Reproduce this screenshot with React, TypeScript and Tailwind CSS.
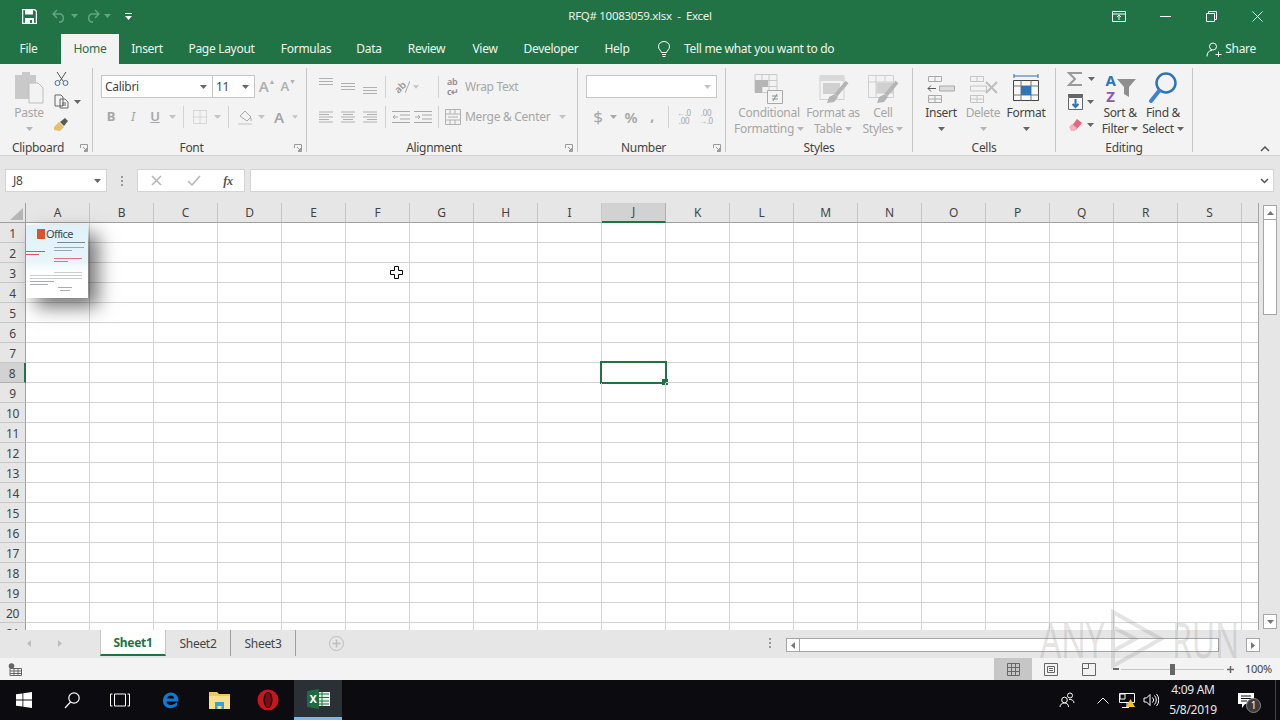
import type { ReactNode } from "react";

const FONT = "[font-family:'Noto_Sans','Open_Sans',sans-serif] tracking-[-0.3px]";
const COLUMNS = ["A", "B", "C", "D", "E", "F", "G", "H", "I", "J", "K", "L", "M", "N", "O", "P", "Q", "R", "S", ""];
const ROWS = Array.from({ length: 21 }, (_, i) => i + 1);
const TABS = [
  { name: "File", w: "w-[57px]" },
  { name: "Home", w: "w-[58px] ml-[4px]" },
  { name: "Insert", w: "w-[56px]" },
  { name: "Page Layout", w: "w-[93px]" },
  { name: "Formulas", w: "w-[76px]" },
  { name: "Data", w: "w-[50px]" },
  { name: "Review", w: "w-[65px]" },
  { name: "View", w: "w-[52px]" },
  { name: "Developer", w: "w-[80px]" },
  { name: "Help", w: "w-[52px]" },
];

function Caret({ color = "#a8a8a8" }: { color?: string }) {
  return (
    <svg width="7" height="4" viewBox="0 0 7 4">
      <path d="M0 0h7L3.5 4z" fill={color} />
    </svg>
  );
}

function Launcher() {
  return (
    <svg width="8" height="8" viewBox="0 0 8 8" fill="none" stroke="#9a9a9a">
      <path d="M.5 4V.5H7.5V7.5H4M3 3l3.5 3.5M6.5 4v2.500H4" />
    </svg>
  );
}

function Group({ w, label, launcher, children }: { w: string; label: string; launcher?: boolean; children: ReactNode }) {
  return (
    <div className={`${w} h-[84px] shrink-0 flex flex-col border-r border-[#c6c6c6]`}>
      <div className="h-[72px] shrink-0 flex">{children}</div>
      <div className="h-[16px] shrink-0 flex items-center text-[12px] text-[#444444]">
        <div className="flex-1 text-center leading-none">{label}</div>
        {launcher && (
          <div className="w-[16px] flex justify-center">
            <Launcher />
          </div>
        )}
      </div>
    </div>
  );
}

function Box({ w, children }: { w: string; children?: ReactNode }) {
  return <div className={`${w} h-full shrink-0 flex items-center justify-center`}>{children}</div>;
}

function Sep({ w = "w-[8px]" }: { w?: string }) {
  return (
    <div className={`${w} h-[22px] shrink-0 flex justify-center`}>
      <div className="w-px h-full bg-[#d2d2d2]" />
    </div>
  );
}

function Big({ w, icon, lines, dim, caretLine }: { w: string; icon: ReactNode; lines: string[]; dim?: boolean; caretLine?: boolean }) {
  const text = dim ? "text-[#a6a6a6]" : "text-[#444444]";
  return (
    <div className={`${w} shrink-0 flex flex-col items-center text-[12px] ${text}`}>
      <div className="h-[37px] flex items-end">{icon}</div>
      {lines.map((line, i) => (
        <div key={line} className="h-[16px] flex items-center gap-[3px] whitespace-nowrap">
          {line}
          {caretLine && i === lines.length - 1 && <Caret color={dim ? "#b5b5b5" : "#666666"} />}
        </div>
      ))}
      {!caretLine && (
        <div className="h-[16px] flex items-center">
          <Caret color={dim ? "#b5b5b5" : "#666666"} />
        </div>
      )}
    </div>
  );
}

function AlignLines({ align = "left" }: { align?: "left" | "center" | "right" }) {
  const short = align === "left" ? "M1 4.500h10M1 9.500h10" : align === "right" ? "M5 4.500h10M5 9.500h10" : "M3 4.500h10M3 9.500h10";
  return (
    <svg width="16" height="14" viewBox="0 0 16 14" fill="none" stroke="#b0b0b0">
      <path d="M1 2h14M1 7h14M1 12h14" />
      <path d={short} />
    </svg>
  );
}

function VLines({ top }: { top: number }) {
  return (
    <svg width="16" height="10" viewBox="0 0 16 10" fill="none" stroke="#b0b0b0" style={{ marginTop: top }}>
      <path d="M1 1.500h14M1 4.500h14M1 7.500h14" />
    </svg>
  );
}

function GridIcon({ children }: { children?: ReactNode }) {
  return (
    <svg width="32" height="32" viewBox="0 0 32 32" fill="none">
      {children}
    </svg>
  );
}

function ClipboardGroup() {
  return (
    <Group w="w-[93px]" label="Clipboard" launcher>
      <div className="ml-[5px] w-[48px] shrink-0 flex flex-col items-center text-[12px] text-[#a6a6a6]">
        <div className="h-[37px] flex items-end">
          <svg width="30" height="34" viewBox="0 0 30 34">
            <path d="M1 4h7V1h8v3h6v24H1z" fill="#c9c9c9" />
            <path d="M15 12h9l5 5v15H15z" fill="#f3f3f3" stroke="#bdbdbd" />
          </svg>
        </div>
        <div className="h-[16px] flex items-center">Paste</div>
        <div className="h-[16px] flex items-center">
          <Caret color="#b5b5b5" />
        </div>
      </div>
      <div className="flex flex-col -mt-px">
        <div className="h-[23px] w-[32px] flex items-center">
          <div className="w-[16px] flex justify-center">
            <svg width="15" height="15" viewBox="0 0 15 15" fill="none" stroke="#555">
              <path d="M3 1l6 9M12 1L6 10" />
              <circle cx="3.500" cy="12" r="2.500" stroke="#3f6f9f" />
              <circle cx="11.500" cy="12" r="2.500" stroke="#3f6f9f" />
            </svg>
          </div>
        </div>
        <div className="h-[23px] w-[32px] flex items-center">
          <div className="w-[16px] flex justify-center">
            <svg width="15" height="15" viewBox="0 0 15 15" fill="none" stroke="#666">
              <path d="M1 1h6l2 2v9H1zM6 5h5l3 3v6H6zM8 9h4M8 11h4" fill="#f3f3f3" />
            </svg>
          </div>
          <div className="w-[16px] flex justify-center">
            <Caret color="#666666" />
          </div>
        </div>
        <div className="h-[23px] w-[32px] flex items-center">
          <div className="w-[16px] flex justify-center">
            <svg width="16" height="16" viewBox="0 0 16 16">
              <path d="M1 10l5-5 5 5-4 4-6-1z" fill="#e3bf6f" />
              <path d="M7 5l5-4 3 3-4 5z" fill="#5a5a5a" />
            </svg>
          </div>
        </div>
      </div>
    </Group>
  );
}

function FontGroup() {
  return (
    <Group w="w-[214px]" label="Font" launcher>
      <div className="flex flex-col pt-[7px] w-full">
        <div className="flex h-[23px] pl-[8px] items-center">
          <div className="w-[112px] h-[23px] bg-white border border-[#c6c6c6] flex items-center justify-between pl-[3px] pr-[5px] text-[12px] text-[#444444]">
            Calibri
            <Caret color="#666666" />
          </div>
          <div className="w-[43px] h-[23px] -ml-px bg-white border border-[#c6c6c6] flex items-center justify-between pl-[3px] pr-[5px] text-[12px] text-[#444444]">
            11
            <Caret color="#666666" />
          </div>
          <Box w="w-[22px] ml-px">
            <span className="text-[15px] font-semibold text-[#b0b0b0]">A</span>
            <span className="text-[7px] text-[#b0b0b0] -mt-[8px]">▲</span>
          </Box>
          <Box w="w-[20px]">
            <span className="text-[13px] font-semibold text-[#b0b0b0]">A</span>
            <span className="text-[7px] text-[#b0b0b0] -mt-[8px]">▼</span>
          </Box>
        </div>
        <div className="flex h-[22px] mt-[8px] pl-[7px] items-center text-[13px] text-[#a6a6a6]">
          <Box w="w-[22px]">
            <span className="font-bold">B</span>
          </Box>
          <Box w="w-[22px]">
            <span className="italic">I</span>
          </Box>
          <Box w="w-[22px]">
            <span className="underline font-semibold">U</span>
          </Box>
          <Box w="w-[12px]">
            <Caret color="#c4c4c4" />
          </Box>
          <div className="w-[1px] ml-[5px] mr-[6px] h-[22px] bg-[#d2d2d2]" />
          <Box w="w-[20px]">
            <svg width="14" height="14" viewBox="0 0 14 14" fill="none" stroke="#bdbdbd" strokeDasharray="1 1">
              <path d="M.5.500h13v13H.5zM7 .5v13M.5 7h13" />
            </svg>
          </Box>
          <Box w="w-[14px]">
            <Caret color="#c4c4c4" />
          </Box>
          <div className="w-[1px] ml-[4px] mr-[7px] h-[22px] bg-[#d2d2d2]" />
          <Box w="w-[20px]">
            <svg width="16" height="16" viewBox="0 0 16 16" fill="none" stroke="#a9a9a9">
              <path d="M2 7l5-5 6 6-4 4z" />
              <path d="M13 9v3" />
              <path d="M0 15h14" stroke="#dcdcdc" strokeWidth="2" />
            </svg>
          </Box>
          <Box w="w-[10px]">
            <Caret color="#c4c4c4" />
          </Box>
          <Box w="w-[26px]">
            <span className="font-semibold text-[15px]">A</span>
          </Box>
          <Box w="w-[6px]">
            <Caret color="#c4c4c4" />
          </Box>
        </div>
      </div>
    </Group>
  );
}

function AlignmentGroup() {
  return (
    <Group w="w-[271px]" label="Alignment" launcher>
      <div className="flex flex-col pt-[7px] w-full pl-[8px] text-[12px] text-[#a6a6a6]">
        <div className="flex h-[23px] items-center">
          <Box w="w-[22px]">
            <VLines top={-9} />
          </Box>
          <Box w="w-[22px]">
            <VLines top={0} />
          </Box>
          <Box w="w-[22px]">
            <VLines top={8} />
          </Box>
          <Sep />
          <div className="ml-[2px] w-[22px] flex justify-center items-center">
            <span className="text-[10px] leading-none font-semibold text-[#9a9a9a] -rotate-45">ab</span>
            <svg width="5" height="14" viewBox="0 0 5 14" fill="none" stroke="#a9a9a9">
              <path d="M0 13L5 1" />
            </svg>
          </div>
          <div className="w-[6px] flex justify-center mr-[15px]">
            <Caret color="#c4c4c4" />
          </div>
          <Sep />
          <div className="w-[22px] flex justify-center text-[9px] leading-[10px] text-[#8d8d8d] font-semibold">
            <span>
              ab
              <br />
              c↵
            </span>
          </div>
          <span className="ml-px whitespace-nowrap">Wrap Text</span>
        </div>
        <div className="flex h-[22px] mt-[8px] items-center">
          <Box w="w-[22px]">
            <AlignLines align="left" />
          </Box>
          <Box w="w-[22px]">
            <AlignLines align="center" />
          </Box>
          <Box w="w-[22px]">
            <AlignLines align="right" />
          </Box>
          <Sep />
          <div className="ml-px w-[22px] flex justify-center">
            <svg width="18" height="14" viewBox="0 0 18 14" fill="none" stroke="#a9a9a9">
              <path d="M0 1.500h18M8 5h10M8 9h10M0 12.500h18M6 7H1M3 5L1 7l2 2" />
            </svg>
          </div>
          <div className="w-[22px] flex justify-center">
            <svg width="18" height="14" viewBox="0 0 18 14" fill="none" stroke="#a9a9a9">
              <path d="M0 1.500h18M8 5h10M8 9h10M0 12.500h18M1 7h5M4 5l2 2-2 2" />
            </svg>
          </div>
          <Sep />
          <div className="w-[22px] flex justify-center">
            <svg width="16" height="16" viewBox="0 0 16 16" fill="none" stroke="#b0b0b0">
              <path d="M.5.500h15v15H.5zM.5 5h15M.5 11h15M5 .5V5M10 .5V5M5 11v4.500M10 11v4.500M3 8h10" />
            </svg>
          </div>
          <span className="ml-px whitespace-nowrap">Merge &amp; Center</span>
          <div className="ml-[9px]">
            <Caret color="#c4c4c4" />
          </div>
        </div>
      </div>
    </Group>
  );
}

function NumberGroup() {
  return (
    <Group w="w-[148px]" label="Number" launcher>
      <div className="flex flex-col pt-[7px] w-full">
        <div className="pl-[8px]">
          <div className="w-[131px] h-[23px] bg-white border border-[#c6c6c6] flex items-center justify-end pr-[5px]">
            <Caret color="#c4c4c4" />
          </div>
        </div>
        <div className="flex h-[22px] mt-[8px] pl-[10px] items-center text-[#a6a6a6]">
          <Box w="w-[20px]">
            <span className="text-[17px]">$</span>
          </Box>
          <Box w="w-[10px]">
            <Caret color="#a8a8a8" />
          </Box>
          <Box w="w-[26px]">
            <span className="text-[15px] font-semibold">%</span>
          </Box>
          <Box w="w-[16px]">
            <span className="text-[14px] font-bold -mt-[4px]">,</span>
          </Box>
          <Sep w="w-[16px]" />
          <Box w="w-[16px]">
            <span className="text-[8px] leading-[8px] text-center whitespace-pre">{"←.0\n.00"}</span>
          </Box>
          <Box w="w-[26px] pl-[2px]">
            <span className="text-[8px] leading-[8px] text-center whitespace-pre">{".00\n→.0"}</span>
          </Box>
        </div>
      </div>
    </Group>
  );
}

function StylesGroup() {
  return (
    <Group w="w-[187px]" label="Styles">
      <div className="flex pl-[8px]">
        <Big
          w="w-[70px]"
          dim
          caretLine
          lines={["Conditional", "Formatting"]}
          icon={
            <GridIcon>
              <path d="M2 1.500h22v18H2zM2 7.500h22M2 13.500h22M9 1.500v18M16 1.500v18" stroke="#c9c9c9" />
              <path d="M2 7h13v7H9v6H2z" fill="#b5b5b5" />
              <path d="M14.500 17.500h15v13h-15z" fill="#f3f3f3" stroke="#a9a9a9" />
              <path d="M19 23h6M19 26h6M24 21l-4 7" stroke="#8e8e8e" />
            </GridIcon>
          }
        />
        <Big
          w="w-[58px]"
          dim
          caretLine
          lines={["Format as", "Table"]}
          icon={
            <GridIcon>
              <path d="M3 2.500h24v24H3z" stroke="#cfcfcf" />
              <path d="M3 2h24v6H3z" fill="#d9d9d9" />
              <path d="M6 10h17v11H6z" fill="#d0d0d0" />
              <path d="M30 9L19 22" stroke="#b5b5b5" strokeWidth="4" />
              <path d="M12 24l6-3 3 3-4 5-7 1z" fill="#b5b5b5" />
            </GridIcon>
          }
        />
        <Big
          w="w-[42px]"
          dim
          caretLine
          lines={["Cell", "Styles"]}
          icon={
            <GridIcon>
              <path d="M1.500 2.500h25v22h-25zM1.500 9h25M9 2.500v22M18 2.500v6" stroke="#cfcfcf" />
              <path d="M9.500 9.500h17v11h-17z" fill="#d0d0d0" />
              <path d="M30 9L19 22" stroke="#b5b5b5" strokeWidth="4" />
              <path d="M12 24l6-3 3 3-4 5-7 1z" fill="#b5b5b5" />
            </GridIcon>
          }
        />
      </div>
    </Group>
  );
}

function CellsGroup() {
  return (
    <Group w="w-[143px]" label="Cells">
      <div className="flex pl-[7px]">
        <Big
          w="w-[42px]"
          lines={["Insert"]}
          icon={
            <GridIcon>
              <path d="M3.500 3.500h13v5h-13zM10 3.500v5M3.500 22.500h13v7h-13zM3.500 26h13M10 22.500v7" stroke="#a9a9a9" />
              <path d="M14.500 13h15v5h-15z" fill="#dcdcdc" stroke="#a9a9a9" />
              <path d="M11 15.500H3M6 12.500l-3 3 3 3" stroke="#5a5a5a" />
            </GridIcon>
          }
        />
        <Big
          w="w-[42px]"
          dim
          lines={["Delete"]}
          icon={
            <GridIcon>
              <path d="M3.500 3.500h13v5h-13zM10 3.500v5M3.500 22.500h13v7h-13zM3.500 26h13M10 22.500v7M3.500 13h16v5h-16z" stroke="#c4c4c4" />
              <path d="M19 9l11 11M30 9L19 20" stroke="#bdbdbd" strokeWidth="2" />
            </GridIcon>
          }
        />
        <Big
          w="w-[44px]"
          lines={["Format"]}
          icon={
            <GridIcon>
              <path d="M4 3h24M4 1v4M28 1v4" stroke="#2f6ea8" />
              <path d="M3.500 7.500h25v20h-25z" fill="#f8f8f8" stroke="#444" />
              <path d="M3.500 13h25M3.500 22h25M11 7.500v20M21 7.500v20" stroke="#777" />
              <path d="M11 13h10v9H11z" fill="#2f74b5" />
            </GridIcon>
          }
        />
      </div>
    </Group>
  );
}

function EditingGroup() {
  return (
    <Group w="w-[137px]" label="Editing">
      <div className="flex pl-[10px]">
        <div className="w-[32px] shrink-0 flex flex-col -mt-px">
          <div className="h-[23px] flex items-center">
            <div className="w-[18px] flex justify-center">
              <svg width="16" height="16" viewBox="0 0 16 16" fill="none" stroke="#9a9a9a" strokeWidth="2">
                <path d="M15 2H2l6 6-6 6h13" />
              </svg>
            </div>
            <div className="w-[14px] pl-[4px]">
              <Caret color="#666666" />
            </div>
          </div>
          <div className="h-[23px] flex items-center">
            <div className="w-[18px] flex justify-center">
              <svg width="15" height="16" viewBox="0 0 15 16">
                <path d="M.5 3.500h14v12H.5z" fill="#f8f8f8" stroke="#666" />
                <path d="M0 0h15v3H0z" fill="#666" />
                <path d="M7.500 5v8M4.500 10l3 3 3-3" stroke="#2f74b5" strokeWidth="2" fill="none" />
              </svg>
            </div>
            <div className="w-[14px] pl-[3px]">
              <Caret color="#666666" />
            </div>
          </div>
          <div className="h-[23px] flex items-center">
            <div className="w-[18px] flex justify-center">
              <svg width="15" height="14" viewBox="0 0 15 14">
                <path d="M9 1l5 4-6 7-5-3z" fill="#e8657e" />
                <path d="M1 9l3-3 5 4-2 3H3z" fill="#f2b3bf" />
              </svg>
            </div>
            <div className="w-[14px] pl-[3px]">
              <Caret color="#666666" />
            </div>
          </div>
        </div>
        <Big
          w="w-[44px]"
          caretLine
          lines={["Sort &", "Filter"]}
          icon={
            <div className="w-[32px] h-[34px] flex items-center">
              <div className="w-[13px] flex flex-col items-center text-[15px] leading-[16px] font-bold">
                <span className="text-[#2f74b5]">A</span>
                <span className="text-[#8a5aa8]">Z</span>
              </div>
              <svg width="19" height="20" viewBox="0 0 19 20">
                <path d="M0 1h19l-7 8v10l-5-3V9z" fill="#8e8e8e" />
              </svg>
            </div>
          }
        />
        <Big
          w="w-[42px]"
          caretLine
          lines={["Find &", "Select"]}
          icon={
            <svg width="30" height="34" viewBox="0 0 30 34" fill="none">
              <circle cx="18" cy="12" r="9.500" stroke="#2f74b5" strokeWidth="2.500" />
              <path d="M11 20L3 30" stroke="#3d85c6" strokeWidth="4" strokeLinecap="round" />
            </svg>
          }
        />
      </div>
    </Group>
  );
}

function Ribbon() {
  return (
    <div className="h-[92px] shrink-0 bg-[#f3f3f3] border-b border-[#d2d2d2] pt-[4px] flex relative">
      <ClipboardGroup />
      <FontGroup />
      <AlignmentGroup />
      <NumberGroup />
      <StylesGroup />
      <CellsGroup />
      <EditingGroup />
      <div className="flex-1 flex items-end justify-end pr-[10px] pb-[3px]">
        <svg width="10" height="6" viewBox="0 0 10 6" fill="none" stroke="#555" strokeWidth="1.500">
          <path d="M1 5l4-4 4 4" />
        </svg>
      </div>
    </div>
  );
}

function TitleBar() {
  return (
    <div className="h-[32px] shrink-0 grid grid-cols-[1fr_auto_1fr] items-center text-white">
      <div className="flex items-center pl-[22px]">
        <svg width="15" height="15" viewBox="0 0 15 15">
          <path d="M.5.500h12l2 2v12H.5z" fill="none" stroke="#fff" strokeWidth="1.500" />
          <path d="M3 1h8v4.500H3zM3 9h9v5H3z" fill="#fff" />
          <path d="M8 11h2v3H8z" fill="#217346" />
        </svg>
        <div className="ml-[15px]">
          <svg width="15" height="14" viewBox="0 0 15 14" fill="none" stroke="#63a582" strokeWidth="1.500">
            <path d="M5 1L1 5l4 4M1 5h8a4.500 4.500 0 0 1 0 8H7" />
          </svg>
        </div>
        <div className="ml-[4px]">
          <Caret color="#63a582" />
        </div>
        <div className="ml-[7px]">
          <svg width="15" height="14" viewBox="0 0 15 14" fill="none" stroke="#63a582" strokeWidth="1.500">
            <path d="M10 1l4 4-4 4M14 5H6a4.500 4.500 0 0 0 0 8h2" />
          </svg>
        </div>
        <div className="ml-[4px]">
          <Caret color="#63a582" />
        </div>
        <div className="ml-[14px] flex flex-col items-center gap-[2px]">
          <div className="w-[7px] h-px bg-white" />
          <Caret color="#ffffff" />
        </div>
      </div>
      <div className="text-[11.500px] whitespace-pre text-[#e8f1ec]">RFQ# 10083059.xlsx  -  Excel</div>
      <div className="flex justify-end h-full">
        <div className="w-[46px] flex items-center justify-center">
          <svg width="14" height="11" viewBox="0 0 14 11" fill="none" stroke="#fff">
            <path d="M.5.500h13v10H.5zM.5 3h13M7 9V4.500M5 6l2-2 2 2" />
          </svg>
        </div>
        <div className="w-[46px] flex items-center justify-center">
          <div className="w-[11px] h-px bg-white" />
        </div>
        <div className="w-[46px] flex items-center justify-center">
          <svg width="11" height="11" viewBox="0 0 11 11" fill="none" stroke="#fff">
            <path d="M.5 2.500h8v8h-8zM2.500 2.500v-2h8v8h-2" />
          </svg>
        </div>
        <div className="w-[46px] flex items-center justify-center">
          <svg width="11" height="11" viewBox="0 0 11 11" fill="none" stroke="#fff">
            <path d="M.5.500l10 10M10.500.5l-10 10" />
          </svg>
        </div>
      </div>
    </div>
  );
}

function TabRow() {
  return (
    <div className="h-[32px] shrink-0 flex items-end text-[12px] text-[#eef5f1]">
      {TABS.map((tab) => (
        <div
          key={tab.name}
          className={`${tab.w} h-[30px] shrink-0 flex items-center justify-center ${
            tab.name === "Home" ? "bg-[#f3f3f3] text-[#217346]" : ""
          }`}
        >
          {tab.name}
        </div>
      ))}
      <div className="h-[30px] flex items-center ml-[14px]">
        <svg width="14" height="16" viewBox="0 0 14 16" fill="none" stroke="#fff">
          <path d="M4.500 11.500C4 9.500 1.500 8.500 1.500 5.500a5.500 5 0 0 1 11 0c0 3-2.500 4-3 6zM5 13.500h4M5.500 15.500h3" />
        </svg>
        <span className="ml-[13px] whitespace-nowrap">Tell me what you want to do</span>
      </div>
      <div className="flex-1" />
      <div className="h-[30px] flex items-center pr-[24px]">
        <svg width="16" height="15" viewBox="0 0 16 15" fill="none" stroke="#fff">
          <circle cx="7" cy="4.500" r="3.500" />
          <path d="M1 14.500c0-4 2-6 5-6.200M9.500 12.500h6M12.500 9.500v6" />
        </svg>
        <span className="ml-[3px]">Share</span>
      </div>
    </div>
  );
}

function FormulaBar() {
  return (
    <div className="h-[47px] shrink-0 bg-[#e6e6e6] flex items-start pt-[13px] pl-[5px] pr-[6px]">
      <div className="w-[102px] h-[23px] bg-white border border-[#d4d4d4] flex items-center justify-between pl-[7px] pr-[5px] text-[12px] text-[#444444]">
        J8
        <Caret color="#666666" />
      </div>
      <div className="w-[30px] h-[23px] flex flex-col items-center justify-center gap-[2px]">
        <div className="w-[2px] h-[2px] bg-[#9a9a9a]" />
        <div className="w-[2px] h-[2px] bg-[#9a9a9a]" />
        <div className="w-[2px] h-[2px] bg-[#9a9a9a]" />
      </div>
      <div className="w-[108px] h-[23px] bg-white border border-[#d4d4d4] flex items-center">
        <Box w="w-[37px]">
          <svg width="11" height="11" viewBox="0 0 11 11" fill="none" stroke="#b5b5b5" strokeWidth="1.500">
            <path d="M1 1l9 9M10 1l-9 9" />
          </svg>
        </Box>
        <Box w="w-[37px]">
          <svg width="14" height="11" viewBox="0 0 14 11" fill="none" stroke="#b5b5b5" strokeWidth="1.500">
            <path d="M1 6l4 4 8-9" />
          </svg>
        </Box>
        <Box w="w-[32px]">
          <span className="text-[12px] italic font-semibold text-[#555555] [font-family:'Liberation_Serif',serif]">fx</span>
        </Box>
      </div>
      <div className="ml-[5px] flex-1 h-[23px] bg-white border border-[#d4d4d4] flex items-center justify-end pr-[4px]">
        <svg width="9" height="6" viewBox="0 0 9 6" fill="none" stroke="#555" strokeWidth="1.500">
          <path d="M1 1l3.500 3.500L8 1" />
        </svg>
      </div>
    </div>
  );
}

function Thumbnail() {
  return (
    <div className="absolute left-[26px] top-[22px] w-[62px] h-[73px] bg-gradient-to-b from-[#dff1fa] via-[#e8f5fb] via-50% to-white to-65% shadow-[10px_9px_18px_rgba(0,0,0,0.55)] flex flex-col overflow-hidden">
      <div className="flex items-center pl-[11px] pt-[2px] gap-[1px] h-[15px]">
        <div className="w-[8px] h-[10px] bg-[#d9532c] shrink-0" />
        <span className="text-[11px] leading-none tracking-[-0.6px] text-[#404a52]">Office</span>
      </div>
      <div className="ml-[31px] mt-[2px] w-[28px] h-px bg-[#7a8a95]" />
      <div className="flex mt-[4px]">
        <div className="w-[20px] flex flex-col gap-[2px] pt-[4px]">
          <div className="w-[19px] h-px bg-[#e0506a]" />
          <div className="w-[13px] h-px bg-[#e0506a]" />
        </div>
        <div className="ml-[8px] flex flex-col gap-[2px]">
          <div className="w-[30px] h-px bg-[#9aa8b2]" />
          <div className="w-[18px] h-px bg-[#9aa8b2]" />
          <div className="h-[3px]" />
          <div className="w-[28px] h-px bg-[#e0708a]" />
          <div className="w-[14px] h-px bg-[#e0708a]" />
        </div>
      </div>
      <div className="mt-[10px] ml-[4px] w-[52px] flex flex-col gap-[2px]">
        <div className="h-px ml-[24px] bg-[#c8ccd0]" />
        <div className="h-px bg-[#c8ccd0]" />
        <div className="h-px bg-[#c8ccd0]" />
        <div className="w-[24px] h-px bg-[#a8adb2]" />
        <div className="w-[18px] h-px bg-[#a8adb2]" />
        <div className="w-[14px] h-px ml-[28px] bg-[#a8adb2]" />
        <div className="w-[10px] h-px ml-[30px] bg-[#a8adb2]" />
      </div>
    </div>
  );
}

function Sheet() {
  return (
    <div className="flex-1 min-h-0 flex bg-white overflow-hidden">
      <div className="relative w-[1259px] shrink-0 h-full overflow-hidden border-r border-[#a6a6a6]">
        <div className="grid grid-cols-[26px_repeat(19,64px)_17px] auto-rows-[20px]">
          <div className="bg-[#e6e6e6] border-r border-b border-[#9f9f9f] flex items-end justify-end pr-[2px] pb-[2px]">
            <svg width="13" height="12" viewBox="0 0 13 12">
              <path d="M13 0v12H0z" fill="#b5b5b5" />
            </svg>
          </div>
          {COLUMNS.map((col, i) => (
            <div
              key={i}
              className={`text-[12px] flex items-center justify-center border-r text-[#444444] ${
                col === "J"
                  ? "bg-[#d2d2d2] border-[#b0b0b0] border-b-2 border-b-[#217346]"
                  : "bg-[#e6e6e6] border-[#c6c6c6] border-b border-b-[#9f9f9f]"
              }`}
            >
              {col}
            </div>
          ))}
          {ROWS.map((row) => (
            <Row key={row} row={row} />
          ))}
        </div>
        <Thumbnail />
        <div className="absolute left-[390px] top-[63px]">
          <svg width="13" height="13" viewBox="0 0 13 13">
            <path d="M4.500.5h4v4h4v4h-4v4h-4v-4h-4v-4h4z" fill="#fff" stroke="#000" />
          </svg>
        </div>
      </div>
      <div className="flex-1 bg-[#e6e6e6] flex flex-col items-center pt-[2px] pl-px">
        <div className="w-[14px] h-[15px] bg-white border border-[#a6a6a6] flex items-center justify-center">
          <svg width="7" height="4" viewBox="0 0 7 4">
            <path d="M0 4h7L3.500 0z" fill="#777" />
          </svg>
        </div>
        <div className="w-[14px] h-[96px] -mt-px bg-white border border-[#a6a6a6]" />
        <div className="flex-1" />
        <div className="w-[14px] h-[15px] bg-white border border-[#a6a6a6] flex items-center justify-center mb-px">
          <Caret color="#777777" />
        </div>
      </div>
    </div>
  );
}

function Row({ row }: { row: number }) {
  const selected = row === 8;
  return (
    <>
      <div
        className={`text-[12px] pt-[2px] flex items-center justify-center border-b text-[#444444] ${
          selected
            ? "bg-[#d2d2d2] border-b-[#b0b0b0] border-r-2 border-r-[#217346]"
            : "bg-[#e6e6e6] border-b-[#c6c6c6] border-r border-r-[#9f9f9f]"
        }`}
      >
        {row}
      </div>
      {COLUMNS.map((col, i) => (
        <div key={i} className="relative border-r border-b border-[#d4d4d4]">
          {selected && col === "J" && (
            <>
              <div className="absolute -left-[2px] -top-[2px] w-[67px] h-[23px] border-2 border-[#217346]" />
              <div className="absolute -right-[3px] -bottom-[3px] w-[6px] h-[6px] bg-[#217346]" />
            </>
          )}
        </div>
      ))}
    </>
  );
}

function SheetTabs() {
  return (
    <div className="h-[28px] shrink-0 bg-[#e6e6e6] flex items-start text-[12px] text-[#444444] relative">
      <div className="w-[100px] h-[26px] flex items-center">
        <div className="w-[58px] flex justify-center">
          <svg width="4" height="7" viewBox="0 0 4 7">
            <path d="M4 0v7L0 3.500z" fill="#bdbdbd" />
          </svg>
        </div>
        <div className="w-[1px]">
          <svg width="4" height="7" viewBox="0 0 4 7">
            <path d="M0 0v7l4-3.500z" fill="#bdbdbd" />
          </svg>
        </div>
      </div>
      <div className="w-[66px] h-[26px] pt-px bg-white border-x border-[#c6c6c6] border-b-[2px] border-b-[#217346] flex items-center justify-center font-bold text-[#217346]">
        Sheet1
      </div>
      <div className="w-[65px] h-[26px] pt-px border-r border-[#9f9f9f] flex items-center justify-center">Sheet2</div>
      <div className="w-[65px] h-[26px] pt-px border-r border-[#9f9f9f] flex items-center justify-center">Sheet3</div>
      <div className="ml-[33px] h-[26px] flex items-center">
        <svg width="15" height="15" viewBox="0 0 15 15" fill="none" stroke="#bdbdbd">
          <circle cx="7.500" cy="7.500" r="7" />
          <path d="M7.500 3.500v8M3.500 7.500h8" strokeWidth="1.500" />
        </svg>
      </div>
      <div className="ml-[425px] w-[2px] h-[26px] flex flex-col items-center justify-center gap-[2px]">
        <div className="w-[2px] h-[2px] bg-[#9a9a9a]" />
        <div className="w-[2px] h-[2px] bg-[#9a9a9a]" />
        <div className="w-[2px] h-[2px] bg-[#9a9a9a]" />
      </div>
      <div className="ml-[15px] mt-[8px] flex items-center h-[14px]">
        <div className="w-[14px] h-[14px] bg-white border border-[#a6a6a6] flex items-center justify-center">
          <svg width="4" height="7" viewBox="0 0 4 7">
            <path d="M4 0v7L0 3.500z" fill="#777" />
          </svg>
        </div>
        <div className="w-[420px] h-[14px] -ml-px bg-white border border-[#a6a6a6]" />
        <div className="w-[27px]" />
        <div className="w-[14px] h-[14px] bg-white border border-[#a6a6a6] flex items-center justify-center">
          <svg width="4" height="7" viewBox="0 0 4 7">
            <path d="M0 0v7l4-3.500z" fill="#777" />
          </svg>
        </div>
      </div>
    </div>
  );
}

function StatusBar() {
  return (
    <div className="h-[22px] shrink-0 bg-[#f3f3f3] flex items-center text-[11px] text-[#444444]">
      <div className="pl-[8px] w-[994px]">
        <svg width="14" height="13" viewBox="0 0 14 13" fill="none">
          <path d="M2 5.500h11.500v7H2zM2 8h11.500M2 10.500h11.500M6 5.500v7M10 5.500v7" stroke="#666" />
          <circle cx="3.500" cy="3" r="2.800" fill="#666" />
        </svg>
      </div>
      <div className="w-[38px] h-full bg-[#c6c6c6] flex items-center justify-center">
        <svg width="13" height="13" viewBox="0 0 13 13" fill="none" stroke="#666">
          <path d="M.5.500h12v12H.5zM4.500.5v12M8.500.5v12M.5 4.500h12M.5 8.500h12" />
        </svg>
      </div>
      <div className="w-[38px] flex justify-center">
        <svg width="14" height="13" viewBox="0 0 14 13" fill="none" stroke="#666">
          <path d="M.5.500h13v12H.5zM3.500 3.500h7v6h-7zM5 5.500h4M5 7.500h4" />
        </svg>
      </div>
      <div className="w-[38px] flex justify-center">
        <svg width="14" height="13" viewBox="0 0 14 13" fill="none" stroke="#666">
          <path d="M.5.500h13v12H.5zM6.500.5v5h-6" />
        </svg>
      </div>
      <div className="ml-[5px] w-[6px] h-[2px] bg-[#666666] shrink-0" />
      <div className="w-[103px] h-px mx-[2px] bg-[#c6c6c6] flex items-center justify-center">
        <div className="w-[5px] h-[11px] bg-[#666666] shrink-0" />
      </div>
      <svg className="ml-[1px] shrink-0" width="7" height="7" viewBox="0 0 7 7" stroke="#666" fill="none" strokeWidth="1.500">
        <path d="M0 3.500h7M3.500 0v7" />
      </svg>
      <span className="ml-[11px] whitespace-nowrap">100%</span>
    </div>
  );
}

function Taskbar() {
  return (
    <div className="h-[40px] shrink-0 bg-[#0b0b10] flex items-center text-white">
      <Box w="w-[48px]">
        <svg width="16" height="16" viewBox="0 0 16 16" fill="#fff">
          <path d="M0 2.300l6.500-.9v6.200H0zM7.300 1.300L16 0v7.600H7.300zM0 8.400h6.500v6.200L0 13.700zM7.300 8.400H16V16l-8.700-1.200z" />
        </svg>
      </Box>
      <Box w="w-[48px]">
        <svg width="16" height="17" viewBox="0 0 16 17" fill="none" stroke="#fff" strokeWidth="1.200">
          <circle cx="10" cy="6" r="5.200" />
          <path d="M6.500 10L1 16" />
        </svg>
      </Box>
      <Box w="w-[48px]">
        <svg width="20" height="14" viewBox="0 0 20 14" fill="none" stroke="#fff">
          <path d="M4.500 1h11v12h-11zM2.500 1H.5v12h2M17.500 1h2v12h-2" />
        </svg>
      </Box>
      <Box w="w-[54px]">
        <svg width="20" height="20" viewBox="0 0 20 20" fill="none">
          <path d="M2.500 11.500h15c.4-5-3-9-7.500-9-4.800 0-8 4-8 8.500 0 5 4.500 8 8.500 7 2-.3 4-1.200 5.500-2.500v-3.500c-2 1.800-4 3-6 3-2.500 0-4.500-1.500-4.500-3.500zM6 8.500c.4-2 2-3 3.800-3s3.200 1 3.400 3z" fill="#1279d3" />
        </svg>
      </Box>
      <Box w="w-[42px]">
        <svg width="21" height="18" viewBox="0 0 21 18">
          <path d="M0 1h8l2 2h11v15H0z" fill="#f2c75c" />
          <path d="M0 5h21v13H0z" fill="#fbe08a" />
          <path d="M6 11h9v7h-2.500v-3h-4v3H6z" fill="#3aa0dc" />
        </svg>
      </Box>
      <Box w="w-[54px] pl-[2px]">
        <svg width="22" height="22" viewBox="0 0 22 22">
          <ellipse cx="11" cy="11" rx="10.500" ry="10.500" fill="#c9161d" />
          <ellipse cx="11" cy="11" rx="4.500" ry="8" fill="#0b0b10" />
          <ellipse cx="11" cy="11" rx="3" ry="7.500" fill="#7e0c10" />
        </svg>
      </Box>
      <div className="w-[48px] h-full bg-[#2b3036] flex items-center justify-center border-b-[3px] border-[#76b9ed]">
        <svg width="23" height="20" viewBox="0 0 23 20">
          <path d="M9 3h14v14H9z" fill="#e6efe9" />
          <path d="M10 5h12M10 8.500h12M10 12h12M10 15h12M15 3v14" stroke="#217346" fill="none" />
          <path d="M0 2l12-2v20L0 18z" fill="#1d6b41" />
          <text x="2.500" y="14" fontSize="11" fontWeight="700" fill="#fff" fontFamily="Noto Sans">X</text>
        </svg>
      </div>
      <div className="flex-1" />
      <Box w="w-[44px]">
        <svg width="16" height="16" viewBox="0 0 16 16" fill="none" stroke="#fff">
          <circle cx="5.500" cy="8" r="2.800" />
          <path d="M1 15c0-2.500 2-4 4.500-4s4 1.500 4 4" />
          <circle cx="11" cy="3.500" r="2.500" />
          <path d="M10 7.500c2.500-.5 5 1 5 3.500" />
        </svg>
      </Box>
      <Box w="w-[28px]">
        <svg width="12" height="7" viewBox="0 0 12 7" fill="none" stroke="#fff">
          <path d="M.5 6.500L6 1l5.500 5.500" />
        </svg>
      </Box>
      <Box w="w-[20px]">
        <svg width="16" height="16" viewBox="0 0 16 16">
          <path d="M.5 1.500h15v9H.5zM8 10.500v5M3 15.500h7" fill="none" stroke="#fff" />
          <path d="M1 2h5v5H1z" fill="#0b0b10" stroke="#fff" />
          <path d="M11.500 7l4.500 8H7z" fill="#f2c230" />
        </svg>
      </Box>
      <Box w="w-[28px]">
        <svg width="16" height="14" viewBox="0 0 16 14" fill="none" stroke="#fff">
          <path d="M1 5h2.500L7 1.500v11L3.500 9H1zM9.500 4.500a3.500 3.500 0 0 1 0 5M11.500 2.500a6.500 6.500 0 0 1 0 9M13.500 1a9 9 0 0 1 0 12" />
        </svg>
      </Box>
      <div className="w-[56px] text-center text-[12px] leading-[20px] whitespace-nowrap text-[#e8e8e8]">
        <div>4:09 AM</div>
        <div>5/8/2019</div>
      </div>
      <div className="relative w-[50px] flex justify-center mr-[4px]">
        <svg width="16" height="15" viewBox="0 0 16 15">
          <path d="M0 0h16v11H7l-3 4v-4H0z" fill="#fff" />
          <path d="M3 3h10M3 5.500h10M3 8h6" stroke="#0b0b10" />
        </svg>
        <div className="absolute left-[25px] top-[5px] w-[15px] h-[15px] rounded-full bg-[#3b3b3b] border border-[#888] text-[10px] leading-none flex items-center justify-center">
          1
        </div>
      </div>
      <div className="w-px h-full bg-[#44464a]" />
      <div className="w-[4px]" />
    </div>
  );
}

function Watermark() {
  return (
    <div className="absolute left-[1040px] top-[608px] h-[62px] flex items-center text-[50px] text-[rgba(120,120,120,0.2)] pointer-events-none leading-none">
      <div className="w-[70px] overflow-visible">
        <span className="inline-block origin-left scale-x-[0.66]">ANY</span>
      </div>
      <svg width="54" height="60" viewBox="0 0 54 60" fill="none" stroke="rgba(120,120,120,0.2)" strokeWidth="4">
        <path d="M3 3l48 27L3 57zM3 18l22 12L3 42" />
      </svg>
      <div className="w-[60px] ml-[8px] overflow-visible">
        <span className="inline-block origin-left scale-x-[0.64]">RUN</span>
      </div>
    </div>
  );
}

export default function App() {
  return (
    <div className={`relative w-[1280px] h-[720px] overflow-hidden flex flex-col bg-[#217346] ${FONT}`}>
      <TitleBar />
      <TabRow />
      <Ribbon />
      <FormulaBar />
      <Sheet />
      <SheetTabs />
      <StatusBar />
      <Taskbar />
      <Watermark />
    </div>
  );
}
